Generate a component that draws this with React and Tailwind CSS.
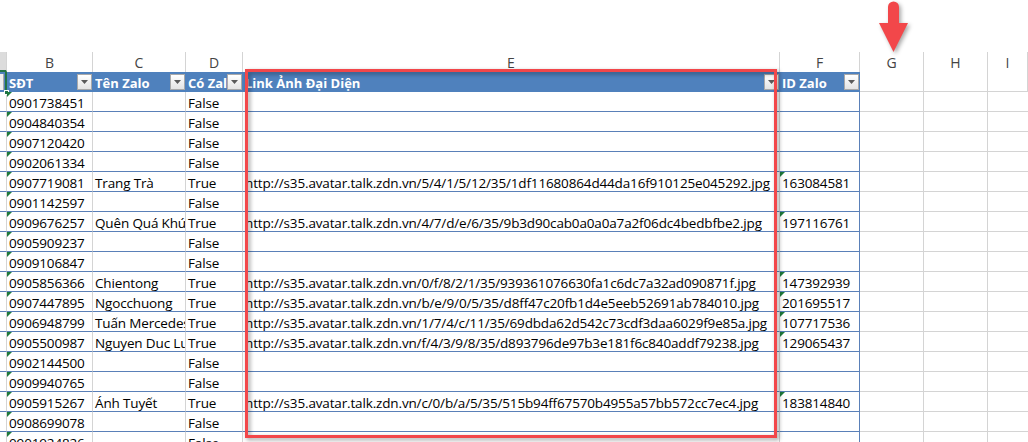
import React from "react";

// column widths (px) taken from the sheet
const COLS = [
  { key: "A", w: "w-[7px]" },
  { key: "B", w: "w-[86px]" },
  { key: "C", w: "w-[93px]" },
  { key: "D", w: "w-[57px]" },
  { key: "E", w: "w-[537px]" },
  { key: "F", w: "w-[80px]" },
  { key: "G", w: "w-[64px]" },
  { key: "H", w: "w-[64px]" },
  { key: "I", w: "flex-1" },
];

const U = "http://s35.avatar.talk.zdn.vn/";

const rows = [
  ["0901738451", "", "False", "", ""],
  ["0904840354", "", "False", "", ""],
  ["0907120420", "", "False", "", ""],
  ["0902061334", "", "False", "", ""],
  ["0907719081", "Trang Trà", "True", U + "5/4/1/5/12/35/1df11680864d44da16f910125e045292.jpg", "163084581"],
  ["0901142597", "", "False", "", ""],
  ["0909676257", "Quên Quá Khứ", "True", U + "4/7/d/e/6/35/9b3d90cab0a0a0a7a2f06dc4bedbfbe2.jpg", "197116761"],
  ["0905909237", "", "False", "", ""],
  ["0909106847", "", "False", "", ""],
  ["0905856366", "Chientong", "True", U + "0/f/8/2/1/35/939361076630fa1c6dc7a32ad090871f.jpg", "147392939"],
  ["0907447895", "Ngocchuong", "True", U + "b/e/9/0/5/35/d8ff47c20fb1d4e5eeb52691ab784010.jpg", "201695517"],
  ["0906948799", "Tuấn Mercedes", "True", U + "1/7/4/c/11/35/69dbda62d542c73cdf3daa6029f9e85a.jpg", "107717536"],
  ["0905500987", "Nguyen Duc Luong", "True", U + "f/4/3/9/8/35/d893796de97b3e181f6c840addf79238.jpg", "129065437"],
  ["0902144500", "", "False", "", ""],
  ["0909940765", "", "False", "", ""],
  ["0905915267", "Ánh Tuyết", "True", U + "c/0/b/a/5/35/515b94ff67570b4955a57bb572cc7ec4.jpg", "183814840"],
  ["0908699078", "", "False", "", ""],
  ["0901924826", "", "False", "", ""],
];

function GreenMark() {
  return (
    <span className="absolute left-0 top-0 w-0 h-0 border-t-[5px] border-r-[5px] border-t-[#1e7a3c] border-r-transparent" />
  );
}

function FilterBtn() {
  return (
    <span className="shrink-0 w-[15px] h-[16px] mr-[1px] bg-linear-to-b from-white to-[#e4e4e4] border border-[#a9a9a9] flex items-center justify-center">
      <svg width="7" height="4" viewBox="0 0 7 4">
        <path d="M0 0h7L3.5 4z" fill="#5a5a5a" />
      </svg>
    </span>
  );
}

function ColumnLetters() {
  return (
    <div className="flex h-[20px]">
      {COLS.map((c) => (
        <div
          key={c.key}
          className={`${c.w} shrink-0 h-full border-r border-[#d4d4d4] flex items-center justify-center pt-[1px] text-[14px] text-[#444] ${
            c.key === "A" ? "bg-[#dcdcdc] border-b-2 border-b-[#217346]" : "bg-white"
          }`}
        >
          {c.key === "A" ? "" : c.key}
        </div>
      ))}
    </div>
  );
}

function TableHeader() {
  const titles = { B: "SĐT", C: "Tên Zalo", D: "Có Zalo", E: "Link Ảnh Đại Diện", F: "ID Zalo" };
  return (
    <div className="flex h-[20px]">
      {COLS.map((c) => {
        const t = titles[c.key];
        if (c.key === "A") {
          return (
            <div key="A" className="w-[7px] shrink-0 h-full bg-[#4f81bd] relative border-r-2 border-[#217346]">
              <span className="absolute left-0 top-[2px] w-[4px] h-[16px] bg-[#eeeeee] border-r border-[#a9a9a9]" />
              <span className="absolute right-[-4px] bottom-[-3px] w-[5px] h-[5px] bg-[#217346] border border-white" />
            </div>
          );
        }
        if (!t) {
          return (
            <div key={c.key} className={`${c.w} shrink-0 h-full bg-white border-r border-b border-[#d4d4d4]`} />
          );
        }
        return (
          <div key={c.key} className={`${c.w} shrink-0 h-full bg-[#4f81bd] flex items-center pl-[2px]`}>
            <span className="flex-1 min-w-0 overflow-hidden whitespace-nowrap font-bold text-white text-[13px] leading-[18px] pt-[2px]">
              {t}
            </span>
            <FilterBtn />
          </div>
        );
      })}
    </div>
  );
}

function DataRow({ r }) {
  const [b, cName, d, e, f] = r;
  const cell =
    "shrink-0 h-full relative flex items-start pt-[2px] pl-[2px] leading-[18px] overflow-hidden whitespace-nowrap";
  return (
    <div className="flex h-[20px] text-[13.5px] tracking-[-0.15px] text-black">
      <div className="w-[7px] shrink-0 h-full border-r border-[#d4d4d4] border-b border-b-[#5a80b8]" />
      <div className={`${cell} w-[86px] border-r border-[#d4d4d4] border-b border-b-[#5a80b8]`}>
        <GreenMark />
        {b}
      </div>
      <div className={`${cell} w-[93px] border-r border-[#d4d4d4] border-b border-b-[#5a80b8]`}>{cName}</div>
      <div className={`${cell} w-[57px] border-r border-[#d4d4d4] border-b border-b-[#5a80b8]`}>{d}</div>
      <div className={`${cell} w-[537px] border-r border-[#d4d4d4] border-b border-b-[#5a80b8]`}>{e}</div>
      <div className={`${cell} w-[80px] border-r border-[#5a80b8] border-b border-b-[#5a80b8]`}>
        {f && <GreenMark />}
        {f}
      </div>
      <div className="w-[64px] shrink-0 h-full border-r border-b border-[#d4d4d4]" />
      <div className="w-[64px] shrink-0 h-full border-r border-b border-[#d4d4d4]" />
      <div className="flex-1 h-full border-b border-[#d4d4d4]" />
    </div>
  );
}

export default function App() {
  return (
    <div className="relative w-[1028px] h-[442px] overflow-hidden bg-white font-['Open_Sans','Liberation_Sans',sans-serif]">
      <div className="h-[52px]" />
      <ColumnLetters />
      <TableHeader />
      {rows.map((r) => (
        <DataRow key={r[0]} r={r} />
      ))}

      {/* red highlight box around column E */}
      <div className="absolute left-[245px] top-[69px] w-[532px] h-[369px] border-[3px] border-[#f2474a] drop-shadow-[2px_2px_2px_rgba(0,0,0,0.4)]" />

      {/* red arrow pointing at column G */}
      <svg
        className="absolute left-[876px] top-0 drop-shadow-[2px_2px_2px_rgba(0,0,0,0.35)]"
        width="34"
        height="54"
        viewBox="0 0 34 54"
      >
        <path d="M12 7a5.5 5.5 0 0 1 11 0v16h9L17.5 52 3 23h9z" fill="#f2474a" />
      </svg>
    </div>
  );
}
